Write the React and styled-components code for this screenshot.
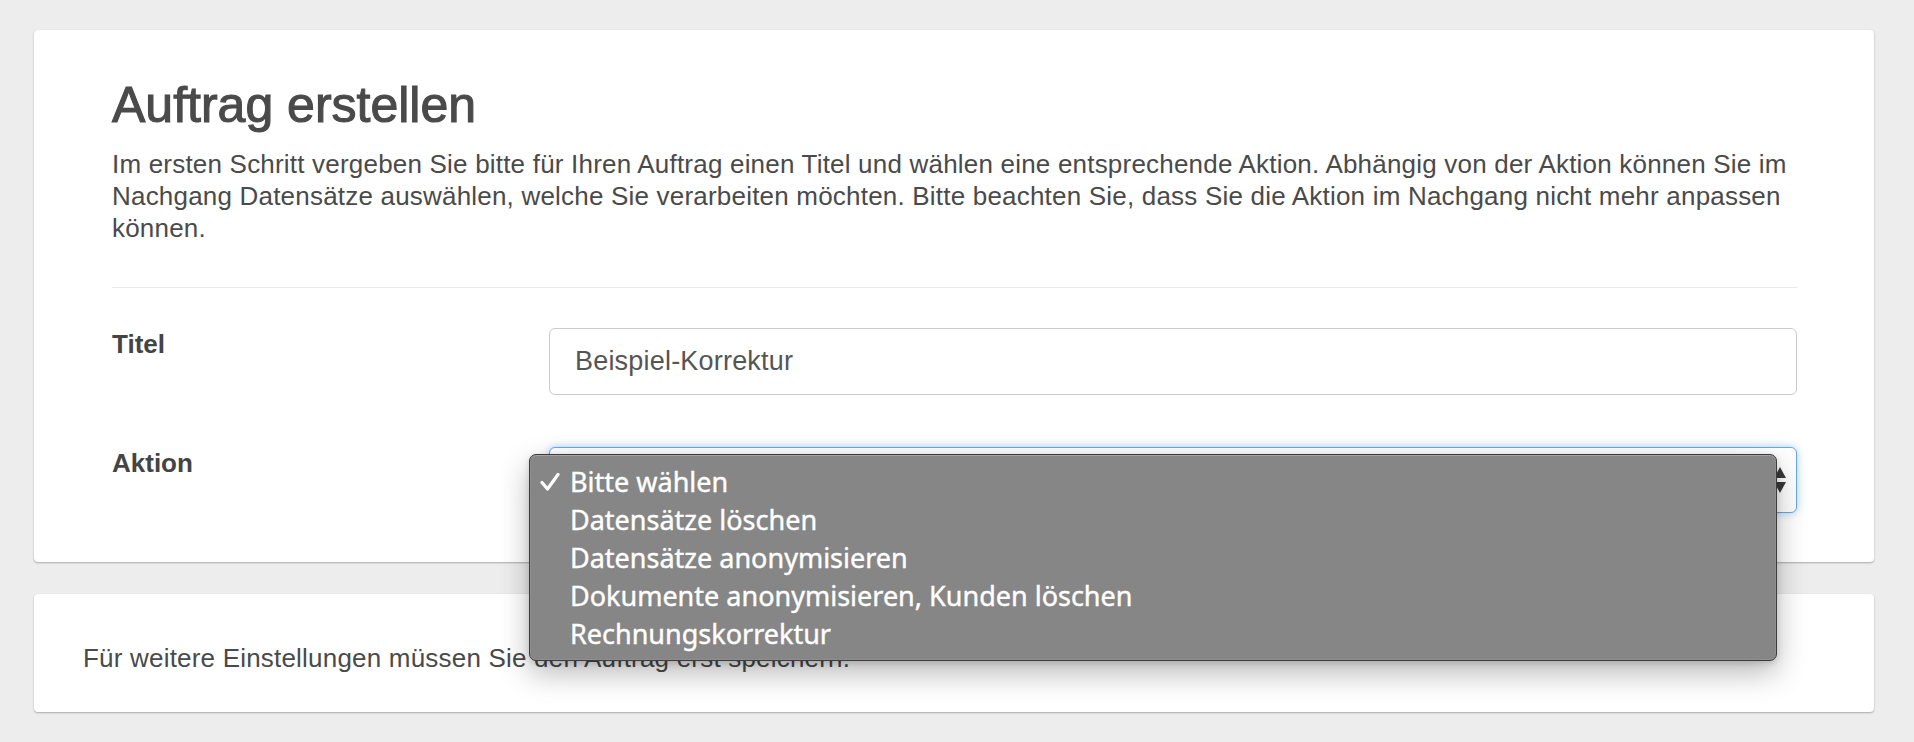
import React from "react";
import styled, { createGlobalStyle } from "styled-components";

const options = [
  "Bitte wählen",
  "Datensätze löschen",
  "Datensätze anonymisieren",
  "Dokumente anonymisieren, Kunden löschen",
  "Rechnungskorrektur",
];

const App = () => {
  return (
    <>
      <GlobalStyles />
      <Page>
        <MainCard>
          <Title>Auftrag erstellen</Title>
          <Intro>
            Im ersten Schritt vergeben Sie bitte für Ihren Auftrag einen Titel
            und wählen eine entsprechende Aktion. Abhängig von der Aktion können
            Sie im Nachgang Datensätze auswählen, welche Sie verarbeiten
            möchten. Bitte beachten Sie, dass Sie die Aktion im Nachgang nicht
            mehr anpassen können.
          </Intro>
          <Divider />
          <FormGrid>
            <Label htmlFor="titel">Titel</Label>
            <TextInput id="titel" defaultValue="Beispiel-Korrektur" />

            <Label>Aktion</Label>
            <SelectBox>
              <SelectValue>Bitte wählen</SelectValue>
              <SelectArrows width="14" height="26" viewBox="0 0 14 26">
                <path d="M7 0 L13 11 L1 11 Z" fill="#3a3a3a" />
                <path d="M1 15 L13 15 L7 26 Z" fill="#3a3a3a" />
              </SelectArrows>
              <Menu>
                {options.map((opt, i) => (
                  <MenuItem key={opt}>
                    {i === 0 && (
                      <Check width="20" height="18" viewBox="0 0 20 18">
                        <path
                          d="M2 9.5 L7.5 16 L18 1.5"
                          fill="none"
                          stroke="#fff"
                          strokeWidth="3.2"
                          strokeLinecap="round"
                          strokeLinejoin="round"
                        />
                      </Check>
                    )}
                    {opt}
                  </MenuItem>
                ))}
              </Menu>
            </SelectBox>
          </FormGrid>
        </MainCard>

        <InfoCard>
          Für weitere Einstellungen müssen Sie den Auftrag erst speichern.
        </InfoCard>
      </Page>
    </>
  );
};

const GlobalStyles = createGlobalStyle`
  html, body {
    margin: 0;
    padding: 0;
    background: #ededed;
    font-family: "Liberation Sans", Arial, sans-serif;
    color: #4a4a4a;
  }
`;

const Page = styled.div`
  display: flex;
  flex-direction: column;
  gap: 32px;
  padding: 30px 40px 30px 34px;
`;

const Card = styled.div`
  background: #fff;
  border-radius: 4px;
  box-shadow: 0 1px 2px rgba(0, 0, 0, 0.28), 0 0 1px rgba(0, 0, 0, 0.08);
`;

const MainCard = styled(Card)`
  padding: 48px 77px 49px 78px;
`;

const InfoCard = styled(Card)`
  padding: 48px 49px 38px;
  font-size: 26px;
  line-height: 32px;
  letter-spacing: 0.2px;
`;

const Title = styled.h1`
  margin: 0;
  font-size: 50px;
  line-height: 55px;
  font-weight: 400;
  color: #4a4a4a;
  -webkit-text-stroke: 1.1px #4a4a4a;
`;

const Intro = styled.p`
  margin: 15px 0 0;
  font-size: 26px;
  line-height: 32px;
  letter-spacing: 0.2px;
`;

const Divider = styled.hr`
  margin: 43px 0 40px;
  border: 0;
  border-top: 1px solid #e9e9e9;
`;

const FormGrid = styled.div`
  display: grid;
  grid-template-columns: 437px 1fr;
  row-gap: 52px;
  align-items: start;
`;

const Label = styled.label`
  font-size: 26px;
  line-height: 32px;
  font-weight: 700;
  color: #444;
`;

const TextInput = styled.input`
  box-sizing: border-box;
  width: 100%;
  height: 67px;
  margin: 0;
  padding: 0 25px;
  border: 1px solid #cbcbcb;
  border-radius: 6px;
  background: #fff;
  font-family: "Liberation Sans", Arial, sans-serif;
  font-size: 27px;
  letter-spacing: 0.2px;
  color: #555;
  outline: none;
`;

const SelectBox = styled.div`
  position: relative;
  box-sizing: border-box;
  height: 66px;
  display: flex;
  align-items: center;
  padding: 0 25px;
  border: 1px solid #66a8e6;
  border-radius: 6px;
  background: #fff;
  box-shadow: 0 0 9px rgba(102, 168, 230, 0.55);
  font-size: 27px;
  color: #555;
`;

const SelectValue = styled.span`
  flex: 1;
`;

const SelectArrows = styled.svg`
  position: absolute;
  right: 9px;
  top: 50%;
  transform: translateY(-50%);
`;

const Menu = styled.ul`
  position: absolute;
  z-index: 10;
  left: -21px;
  top: 6px;
  box-sizing: border-box;
  width: 1248px;
  margin: 0;
  padding: 7px 0 8px;
  list-style: none;
  background: #868686;
  border: 1px solid #3c3c3c;
  border-radius: 7px;
  box-shadow: inset 0 1px 0 rgba(255, 255, 255, 0.18),
    inset 0 0 0 1px rgba(255, 255, 255, 0.08),
    0 12px 30px rgba(0, 0, 0, 0.28), 0 2px 6px rgba(0, 0, 0, 0.15);
`;

const MenuItem = styled.li`
  position: relative;
  height: 38px;
  display: flex;
  align-items: center;
  padding-left: 40px;
  font-family: "Noto Sans", "Liberation Sans", sans-serif;
  font-size: 27px;
  color: #fff;
  -webkit-text-stroke: 0.4px #fff;
`;

const Check = styled.svg`
  position: absolute;
  left: 10px;
  top: 11px;
`;

export default App;
